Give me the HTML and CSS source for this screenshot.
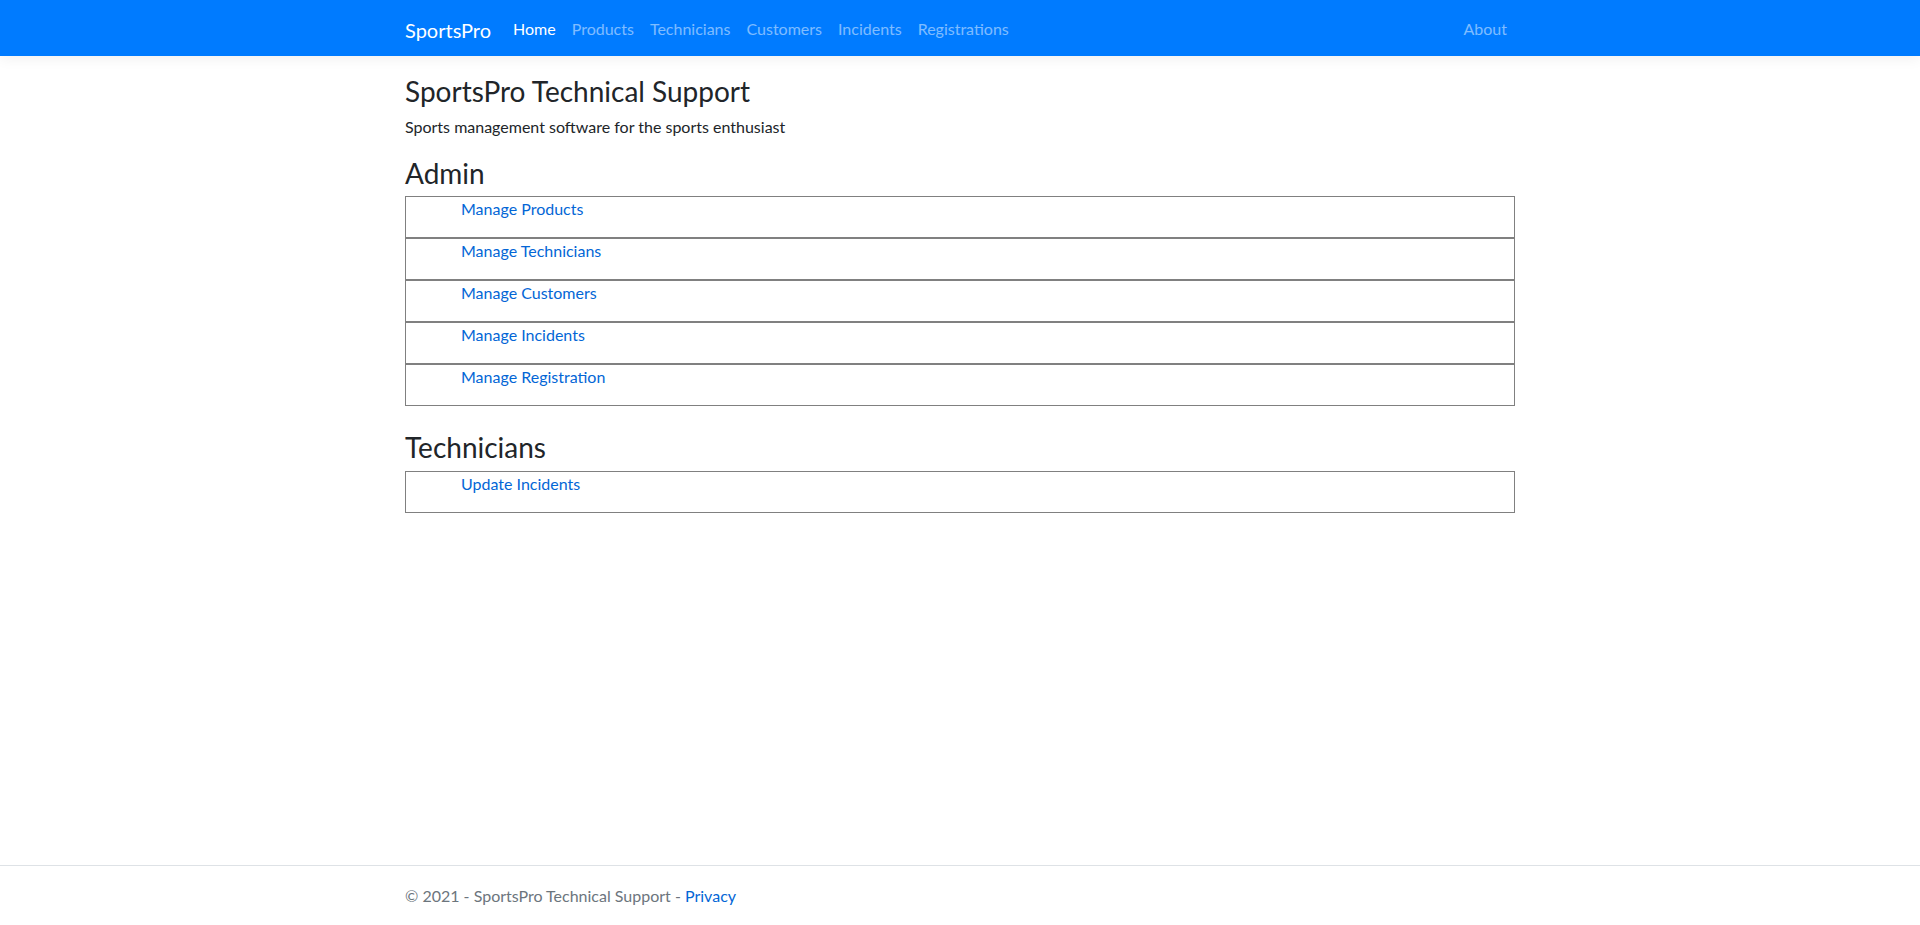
FILE: index.html
```html
<!DOCTYPE html>
<html lang="en">
<head>
<meta charset="utf-8">
<title>Home - SportsPro</title>
<link rel="stylesheet" href="styles.css">
</head>
<body>
<div class="page">
  <header class="navbar">
    <div class="container nav-inner">
      <a class="brand" href="#">SportsPro</a>
      <ul class="nav-list">
        <li><a class="nav-link active" href="#">Home</a></li>
        <li><a class="nav-link" href="#">Products</a></li>
        <li><a class="nav-link" href="#">Technicians</a></li>
        <li><a class="nav-link" href="#">Customers</a></li>
        <li><a class="nav-link" href="#">Incidents</a></li>
        <li><a class="nav-link" href="#">Registrations</a></li>
      </ul>
      <ul class="nav-list nav-right">
        <li><a class="nav-link" href="#">About</a></li>
      </ul>
    </div>
  </header>

  <main class="container main">
    <h3 class="title">SportsPro Technical Support</h3>
    <p class="lead-text">Sports management software for the sports enthusiast</p>

    <h3 class="section-title">Admin</h3>
    <div class="link-list">
      <div class="link-item"><p><a href="#">Manage Products</a></p></div>
      <div class="link-item"><p><a href="#">Manage Technicians</a></p></div>
      <div class="link-item"><p><a href="#">Manage Customers</a></p></div>
      <div class="link-item"><p><a href="#">Manage Incidents</a></p></div>
      <div class="link-item"><p><a href="#">Manage Registration</a></p></div>
    </div>

    <h3 class="section-title">Technicians</h3>
    <div class="link-list">
      <div class="link-item"><p><a href="#">Update Incidents</a></p></div>
    </div>
  </main>

  <footer class="footer">
    <div class="container">
      &copy; 2021 - SportsPro Technical Support - <a href="#">Privacy</a>
    </div>
  </footer>
</div>
</body>
</html>
```

FILE: styles.css
```css
* { box-sizing: border-box; }

html, body {
  margin: 0;
  padding: 0;
}

body {
  font-family: "Segoe UI", Lato, "Open Sans", sans-serif;
  font-size: 16px;
  line-height: 1.5;
  color: #212529;
  background: #fff;
}

a {
  color: #0366d6;
  text-decoration: none;
}

.page {
  min-height: 925px;
  display: flex;
  flex-direction: column;
}

.container {
  width: 1140px;
  margin: 0 auto;
  padding: 0 15px;
}

.navbar {
  background: #007bff;
  height: 56px;
  box-shadow: 0 4px 12px rgba(0, 0, 0, 0.05);
  padding: 8px 0;
}

.nav-inner {
  display: flex;
  align-items: center;
  height: 40px;
}

.brand {
  color: #fff;
  font-size: 20px;
  line-height: 30px;
  margin-right: 14px;
  padding: 7px 0 3px;
}

.nav-list {
  list-style: none;
  margin: 0;
  padding: 0;
  display: flex;
}

.nav-right {
  margin-left: auto;
}

.nav-link {
  display: block;
  padding: 9px 8px 7px;
  line-height: 24px;
  color: rgba(255, 255, 255, 0.5);
}

.nav-link.active {
  color: #fff;
}

.main {
  flex: 1;
  padding-top: 18px;
}

.title {
  font-size: 28px;
  font-weight: 400;
  line-height: 1.2;
  padding-top: 1px;
  margin: 0 0 6px;
}

.lead-text {
  margin: 0 0 16px;
}

.section-title {
  font-size: 28px;
  font-weight: 400;
  line-height: 1.2;
  padding-top: 2px;
  margin: 0 0 6px;
}

.link-list {
  margin-bottom: 23px;
}

.link-item {
  border: 1px solid #808080;
  padding-left: 55px;
}

.link-item p {
  margin: 0 0 16px;
}

.footer {
  height: 60px;
  border-top: 1px solid #dee2e6;
  line-height: 60px;
  color: #6c757d;
  white-space: nowrap;
}
```
